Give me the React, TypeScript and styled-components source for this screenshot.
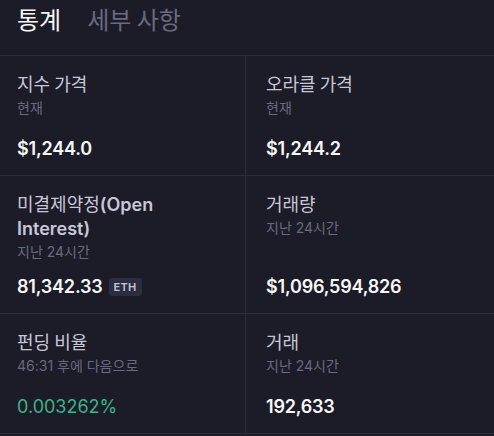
import React, { FC } from "react";
import styled, { createGlobalStyle } from "styled-components";

const GlobalStyle = createGlobalStyle`
  html, body {
    margin: 0;
    padding: 0;
    background: #1c1c28;
  }
  body {
    font-family: Inter, "Noto Sans CJK KR", sans-serif;
    -webkit-font-smoothing: antialiased;
  }
`;

const Container = styled.div`
  width: 494px;
  height: 436px;
  background: #1c1c28;
  overflow: hidden;
`;

const Tabs = styled.div`
  height: 56px;
  display: flex;
  align-items: flex-start;
  gap: 26px;
  padding: 4px 0 0 17px;
  box-sizing: border-box;
  border-bottom: 1px solid #2d2d3d;
`;

const Tab = styled.div<{ $active?: boolean }>`
  font-family: "Noto Sans CJK KR", Inter, sans-serif;
  font-size: 24px;
  line-height: 30px;
  color: ${(p) => (p.$active ? "#f7f7f7" : "#6a697e")};
`;

const Grid = styled.div`
  display: grid;
  grid-template-columns: 245px 1fr;
`;

const Cell = styled.div<{ $right?: boolean }>`
  display: flex;
  flex-direction: column;
  min-height: 120px;
  box-sizing: border-box;
  padding: 15px 17px 14px ${(p) => (p.$right ? "20px" : "17px")};
  border-bottom: 1px solid #2d2d3d;
  border-left: ${(p) => (p.$right ? "1px solid #2d2d3d" : "none")};
`;

const Label = styled.div`
  font-family: "Noto Sans CJK KR", Inter, sans-serif;
  font-size: 18px;
  line-height: 24px;
  font-weight: 400;
  color: #c8c7d8;
`;

const Latin = styled.span`
  font-family: Inter, sans-serif;
  font-weight: 600;
  line-height: 16px;
`;

const Sub = styled.div`
  margin-top: 3px;
  font-size: 14px;
  line-height: 20px;
  color: #6a697e;
`;

const ValueRow = styled.div`
  margin-top: auto;
  padding-top: 13px;
  display: flex;
  align-items: center;
  gap: 6px;
`;

const Value = styled.div<{ $green?: boolean }>`
  font-size: 18px;
  line-height: 24px;
  font-weight: ${(p) => (p.$green ? 400 : 600)};
  color: ${(p) => (p.$green ? "#3db288" : "#f7f7f7")};
  letter-spacing: ${(p) => (p.$green ? "0" : "-0.2px")};
`;

const Badge = styled.span`
  display: inline-flex;
  align-items: center;
  height: 18px;
  padding: 0 5px;
  border-radius: 3px;
  background: #2d2d42;
  color: #c8c7d8;
  font-size: 11px;
  font-weight: 600;
  letter-spacing: 0.3px;
`;

interface IStat {
  label: string;
  latin?: string;
  sub: string;
  value: string;
  badge?: string;
  green?: boolean;
}

const stats: IStat[] = [
  { label: "지수 가격", sub: "현재", value: "$1,244.0" },
  { label: "오라클 가격", sub: "현재", value: "$1,244.2" },
  {
    label: "미결제약정",
    latin: "(Open Interest)",
    sub: "지난 24시간",
    value: "81,342.33",
    badge: "ETH",
  },
  { label: "거래량", sub: "지난 24시간", value: "$1,096,594,826" },
  {
    label: "펀딩 비율",
    sub: "46:31 후에 다음으로",
    value: "0.003262%",
    green: true,
  },
  { label: "거래", sub: "지난 24시간", value: "192,633" },
];

const App: FC = () => {
  return (
    <Container>
      <GlobalStyle />
      <Tabs>
        <Tab $active>통계</Tab>
        <Tab>세부 사항</Tab>
      </Tabs>
      <Grid>
        {stats.map((s, i) => (
          <Cell key={s.label} $right={i % 2 === 1}>
            <Label>
              {s.label}
              {s.latin && <Latin>{s.latin}</Latin>}
            </Label>
            <Sub>{s.sub}</Sub>
            <ValueRow>
              <Value $green={s.green}>{s.value}</Value>
              {s.badge && <Badge>{s.badge}</Badge>}
            </ValueRow>
          </Cell>
        ))}
      </Grid>
    </Container>
  );
};

export default App;
